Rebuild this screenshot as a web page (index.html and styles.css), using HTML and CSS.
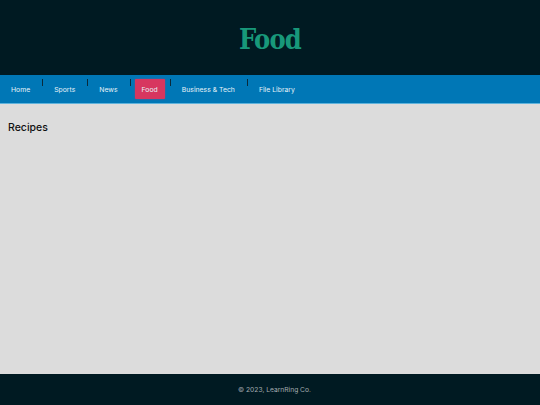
FILE: index.html
```html
<!DOCTYPE html>
<html lang="en">
<head>
<meta charset="utf-8">
<title>Food</title>
<link rel="stylesheet" href="styles.css">
</head>
<body>
<div class="page">
  <header class="masthead">
    <h1 class="title">Food</h1>
  </header>
  <nav class="nav">
    <ul class="nav-list">
      <li class="nav-item"><a class="nav-link" href="#">Home</a></li>
      <li class="nav-item sep"><a class="nav-link" href="#">Sports</a></li>
      <li class="nav-item sep"><a class="nav-link" href="#">News</a></li>
      <li class="nav-item sep"><a class="nav-link active" href="#">Food</a></li>
      <li class="nav-item sep"><a class="nav-link" href="#">Business &amp; Tech</a></li>
      <li class="nav-item sep"><a class="nav-link" href="#">File Library</a></li>
    </ul>
  </nav>
  <main class="content">
    <h2 class="section-title">Recipes</h2>
  </main>
  <footer class="footer">© 2023, LearnRing Co.</footer>
</div>
</body>
</html>
```
FILE: styles.css
```css
* { box-sizing: border-box; }
html, body { margin: 0; padding: 0; height: 100%; }
body {
  font-family: Inter, "Liberation Sans", sans-serif;
  background: #dcdcdc;
}
.page {
  display: flex;
  flex-direction: column;
  height: 405px;
}
.masthead {
  background: #001a22;
  height: 75px;
  display: flex;
  align-items: center;
  justify-content: center;
}
.title {
  margin: 4px 0 0 0;
  font-family: "DejaVu Serif Condensed", "DejaVu Serif", "Liberation Serif", serif;
  font-stretch: condensed;
  font-weight: bold;
  font-size: 27px;
  line-height: 1;
  color: #18987a;
  letter-spacing: -0.8px;
}
.nav {
  background: #0077b6;
  height: 29px;
  border-bottom: 1px solid #5fb3dc;
}
.nav-list {
  list-style: none;
  margin: 0;
  padding: 0;
  display: flex;
  align-items: center;
  height: 100%;
}
.nav-item {
  position: relative;
  padding: 0 5px;
}
.nav-item:first-child { padding-left: 4px; }
.nav-item.sep::before {
  content: "";
  position: absolute;
  left: 0;
  top: 0;
  width: 1px;
  height: 7px;
  background: #0a2a3a;
}
.nav-link {
  display: block;
  padding: 6px 7px 4px;
  font-size: 6.85px;
  line-height: 10px;
  color: #e6f2f8;
  text-decoration: none;
}
.nav-link.active {
  background: #d7365f;
  border-radius: 1px;
  box-shadow: 0 0 2px rgba(215, 54, 95, 0.6);
}
.content {
  flex: 1;
  padding: 17px 8px;
}
.section-title {
  margin: 0;
  font-size: 10.5px;
  font-weight: 500;
  color: #111;
}
.footer {
  background: #001a22;
  height: 31px;
  padding-left: 9px;
  display: flex;
  align-items: center;
  justify-content: center;
  font-size: 6.7px;
  color: #a3abaf;
}
```
